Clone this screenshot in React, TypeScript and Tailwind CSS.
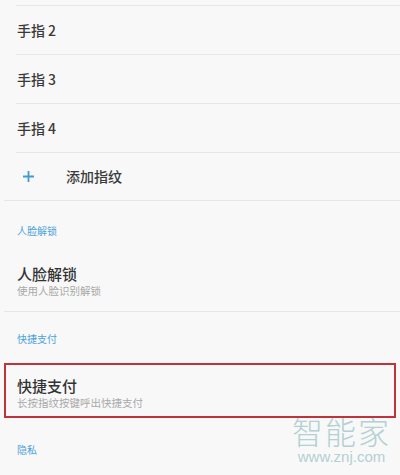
const font = 'font-["Noto_Sans_CJK_SC","Noto_Sans",sans-serif]';

function FingerRow({ n }: { n: number }) {
  return (
    <div className="ml-4 h-[49px] border-b border-[#e7e7e7] flex items-center">
      <span className="pl-[1px] text-[14px] font-medium text-[#3a3a3a]">
        手指<span className="ml-[3px]">{n}</span>
      </span>
    </div>
  );
}

function SectionHeader({ label, height, pt }: { label: string; height: string; pt: string }) {
  return (
    <div className={`${height} ${pt} pl-[17px] text-[10px] leading-[12px] text-[#4da2d8]`}>{label}</div>
  );
}

export default function App() {
  return (
    <div className={`w-[400px] h-[475px] overflow-hidden bg-[#f8f8f8] relative ${font}`}>
      <div className="h-[6px] ml-4 border-b border-[#e7e7e7]" />
      <FingerRow n={2} />
      <FingerRow n={3} />
      <FingerRow n={4} />

      <div className="h-[48px] ml-1 border-b border-[#e7e7e7] flex items-center">
        <svg width="13" height="13" viewBox="0 0 13 13" className="ml-[18px]">
          <path d="M6.5 1v11M1 6.5h11" stroke="#3f9bd6" strokeWidth="1.8" />
        </svg>
        <span className="ml-[31px] text-[14px] font-medium text-[#3a3a3a]">添加指纹</span>
      </div>

      <SectionHeader label="人脸解锁" height="h-[50px]" pt="pt-[24px]" />

      <div className="h-[61px] ml-1 border-b border-[#e7e7e7] pl-[13px] pt-[14px]">
        <div className="text-[15px] leading-[18px] font-medium text-[#333]">人脸解锁</div>
        <div className="mt-[1px] text-[10.5px] leading-[13px] text-[#a8a8a8]">使用人脸识别解锁</div>
      </div>

      <SectionHeader label="快捷支付" height="h-[51px]" pt="pt-[21px]" />

      <div className="mx-1 h-[55px] border-2 border-[#bf343b] pl-[11px] pt-[12px]">
        <div className="text-[15px] leading-[18px] font-medium text-[#333]">快捷支付</div>
        <div className="mt-[1px] text-[10.5px] leading-[13px] text-[#a8a8a8]">长按指纹按键呼出快捷支付</div>
      </div>

      <SectionHeader label="隐私" height="h-[40px]" pt="pt-[26px]" />

      <div className="absolute right-[9px] bottom-[11px] flex flex-col items-center text-[#b3d0d4]">
        <span className="text-[31px] leading-[30px] tracking-[2px] font-light">智能家</span>
        <span className="text-[15px] leading-[15px] mt-[3px] font-['Liberation_Sans',sans-serif]">www.znj.com</span>
      </div>
    </div>
  );
}
